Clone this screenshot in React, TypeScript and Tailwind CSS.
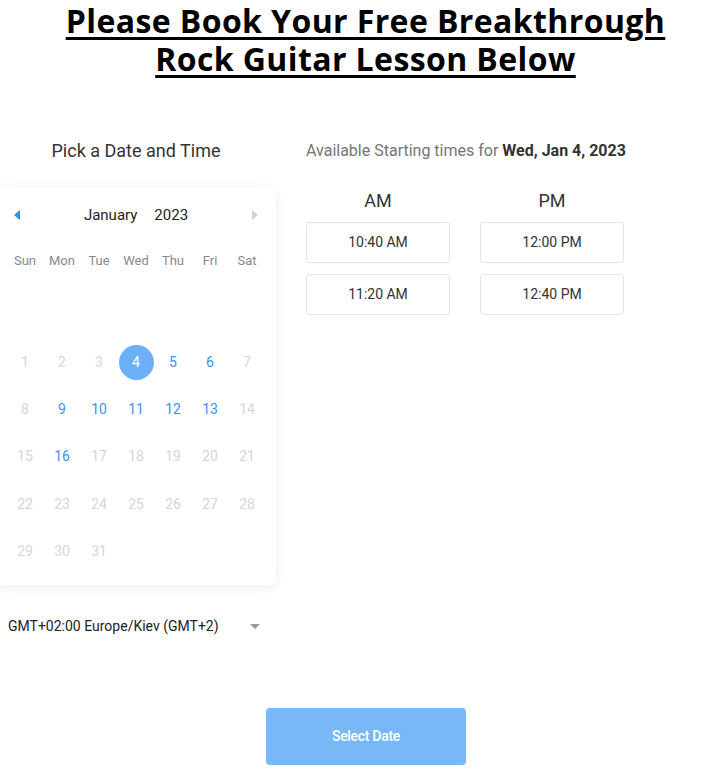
import { Fragment } from "react";

const weekdays = ["Sun", "Mon", "Tue", "Wed", "Thu", "Fri", "Sat"];
const available = [5, 6, 9, 10, 11, 12, 13, 16];
const selected = 4;

function DayCell({ day }: { day: number }) {
	if (day === selected) {
		return (
			<div className="flex h-[47.25px] items-center justify-center">
				<span className="flex h-[35px] w-[35px] items-center justify-center rounded-full bg-[#6cb1f8] text-white">
					{day}
				</span>
			</div>
		);
	}
	return (
		<div
			className={`flex h-[47.25px] items-center justify-center ${
				available.includes(day) ? "text-[#3a93f0]" : "text-[#d6d6d6]"
			}`}
		>
			{day}
		</div>
	);
}

function Calendar() {
	const days = Array.from({ length: 31 }, (_, i) => i + 1);
	return (
		<div className="rounded-md bg-white px-[10.5px] pt-[13px] pb-[10px] shadow-[0_2px_12px_rgba(0,0,0,0.07)]">
			<div className="flex h-[30px] items-center justify-between px-[7px]">
				<svg width="6" height="10" viewBox="0 0 6 10">
					<path d="M6 0 L0 5 L6 10 Z" fill="#2f8df0" />
				</svg>
				<div className="flex gap-[17px] text-[15px] text-[#222]">
					<span>January</span>
					<span>2023</span>
				</div>
				<svg width="6" height="10" viewBox="0 0 6 10">
					<path d="M0 0 L6 5 L0 10 Z" fill="#d3d3d3" />
				</svg>
			</div>
			<div className="mt-[21px] grid grid-cols-7 text-[13px] text-[#888]">
				{weekdays.map((d) => (
					<div key={d} className="text-center">
						{d}
					</div>
				))}
			</div>
			<div className="mt-[21px] grid grid-cols-7 text-[14px]">
				{weekdays.map((d) => (
					<div key={`e-${d}`} className="h-[47.25px]" />
				))}
				{days.map((d) => (
					<Fragment key={d}>
						<DayCell day={d} />
					</Fragment>
				))}
				{Array.from({ length: 4 }, (_, i) => (
					<div key={`t-${i}`} className="h-[47.25px]" />
				))}
			</div>
		</div>
	);
}

function TimeButton({ label }: { label: string }) {
	return (
		<button className="flex h-[41px] w-[144px] items-center justify-center rounded-[3px] border border-[#dfe6ee] bg-white text-[14px] text-[#333]">
			{label}
		</button>
	);
}

export default function App() {
	return (
		<div className="min-h-[771px] bg-white font-['Roboto',sans-serif] text-[#333]">
			<h1 className="pt-[2px] pl-[12px] text-center font-['Open_Sans',sans-serif] text-[32px] leading-[38px] font-bold tracking-[0.4px] text-black underline decoration-[3px] underline-offset-[4px]">
				<span className="block">Please Book Your Free Breakthrough</span>
				<span className="block">Rock Guitar Lesson Below</span>
			</h1>

			<div className="mt-[61px] flex">
				<div className="-ml-[4px] w-[280px]">
					<h2 className="text-center text-[18px] leading-[24px] text-[#333]">
						Pick a Date and Time
					</h2>
					<div className="mt-[24px]">
						<Calendar />
					</div>
					<div className="mt-[31px] flex items-center justify-between pr-[16px] pl-[12px] text-[14px] text-[#222]">
						<span>GMT+02:00 Europe/Kiev (GMT+2)</span>
						<svg width="10" height="5" viewBox="0 0 10 5">
							<path d="M0 0 L10 0 L5 5 Z" fill="#999" />
						</svg>
					</div>
				</div>

				<div className="ml-[30px]">
					<p className="text-[16px] leading-[24px] text-[#757575]">
						Available Starting times for{" "}
						<span className="font-bold text-[#333]">Wed, Jan 4, 2023</span>
					</p>
					<div className="mt-[26px] flex gap-[30px]">
						<div className="flex flex-col gap-[11px]">
							<div className="mb-[-2px] text-center text-[18px] leading-[24px] text-[#333]">AM</div>
							<TimeButton label="10:40 AM" />
							<TimeButton label="11:20 AM" />
						</div>
						<div className="flex flex-col gap-[11px]">
							<div className="mb-[-2px] text-center text-[18px] leading-[24px] text-[#333]">PM</div>
							<TimeButton label="12:00 PM" />
							<TimeButton label="12:40 PM" />
						</div>
					</div>
				</div>
			</div>

			<div className="mt-[71px] flex justify-center">
				<button className="ml-[13px] h-[57px] w-[200px] rounded-[4px] bg-[#79b8f7] text-[14px] font-medium tracking-[-0.3px] text-white">
					Select Date
				</button>
			</div>
		</div>
	);
}
